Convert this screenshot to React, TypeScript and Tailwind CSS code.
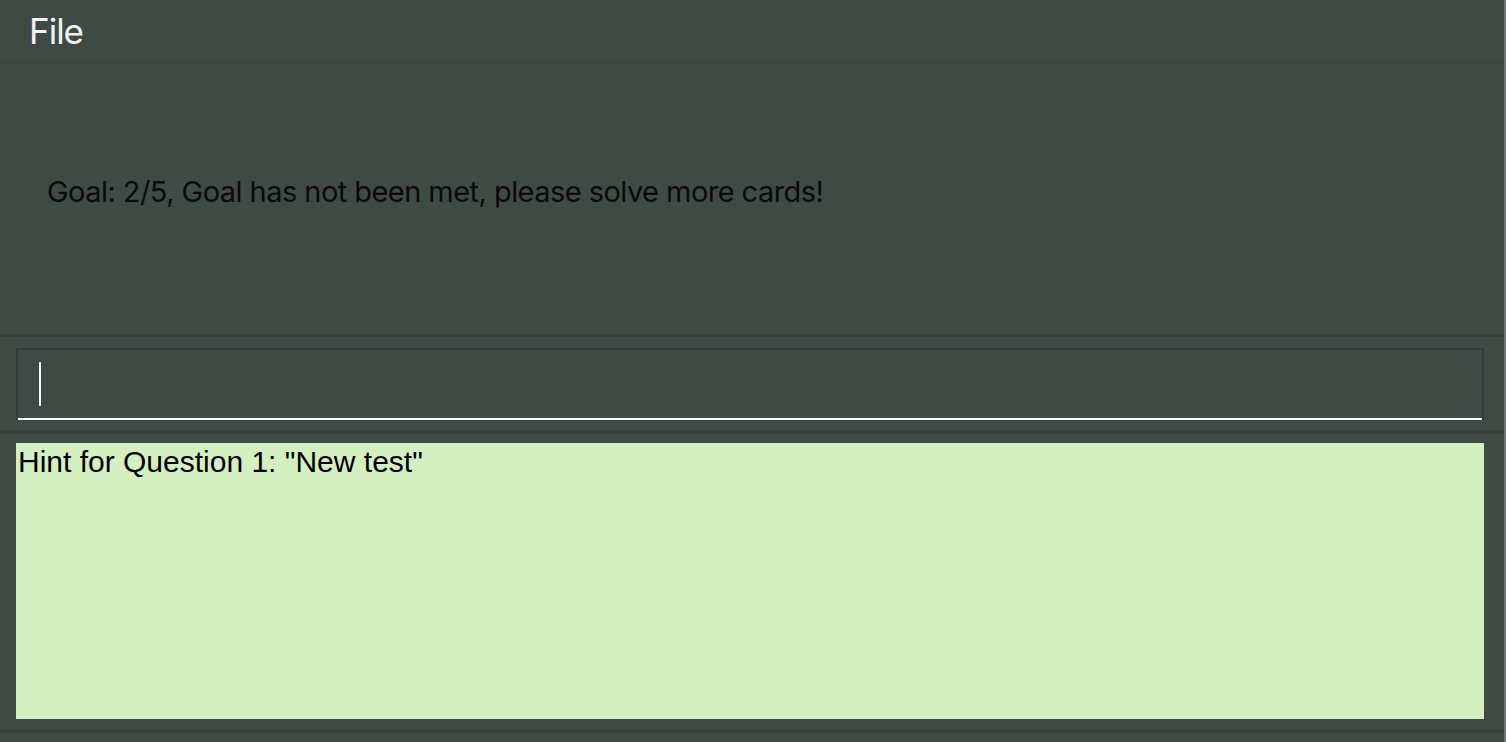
import React from "react";

export default function App() {
  return (
    <div className="w-[1506px] h-[742px] flex bg-[#3e4b45] overflow-hidden">
      <div className="w-[1504px] h-full flex flex-col">
        <div className="h-[63px] flex items-center pl-[29px] border-b border-[#36423c]">
          <span className="text-[#f2f2f2] text-[35px] leading-none tracking-[-1px]" style={{ fontFamily: "Inter, 'Noto Sans', sans-serif" }}>File</span>
        </div>
        <div className="h-[271px] flex items-center pl-[47px] pb-[14px]">
          <span className="text-[#0a0a0a] text-[29px] leading-none tracking-[-0.55px]" style={{ fontFamily: "Inter, 'Noto Sans', sans-serif" }}>
            Goal: 2/5, Goal has not been met, please solve more cards!
          </span>
        </div>
        <div className="h-[3px] bg-[#35413b]" />
        <div className="h-[93px] pt-[11px] pl-[16px] pr-[20px]">
          <div className="h-[72px] border-2 border-b-0 border-[#3a3a3a] flex flex-col">
            <div className="flex-1 pl-[21px] pt-[12px]">
              <div className="w-[2px] h-[44px] bg-white" />
            </div>
            <div className="h-[2px] bg-white" />
          </div>
        </div>
        <div className="h-[4px] bg-[#35413b]" />
        <div className="h-[295px] pt-[9px] pl-[16px] pr-[20px]">
          <div className="h-[276px] bg-[#d4f0c0] pl-[2px] pt-[2px]">
            <span className="text-black text-[30px] leading-[34px]" style={{ fontFamily: "'Liberation Sans', Arial, sans-serif" }}>
              Hint for Question 1: "New test"
            </span>
          </div>
        </div>
        <div className="h-[4px] bg-[#35413b]" />
      </div>
      <div className="w-[2px] h-full bg-[#6d7570]" />
    </div>
  );
}
